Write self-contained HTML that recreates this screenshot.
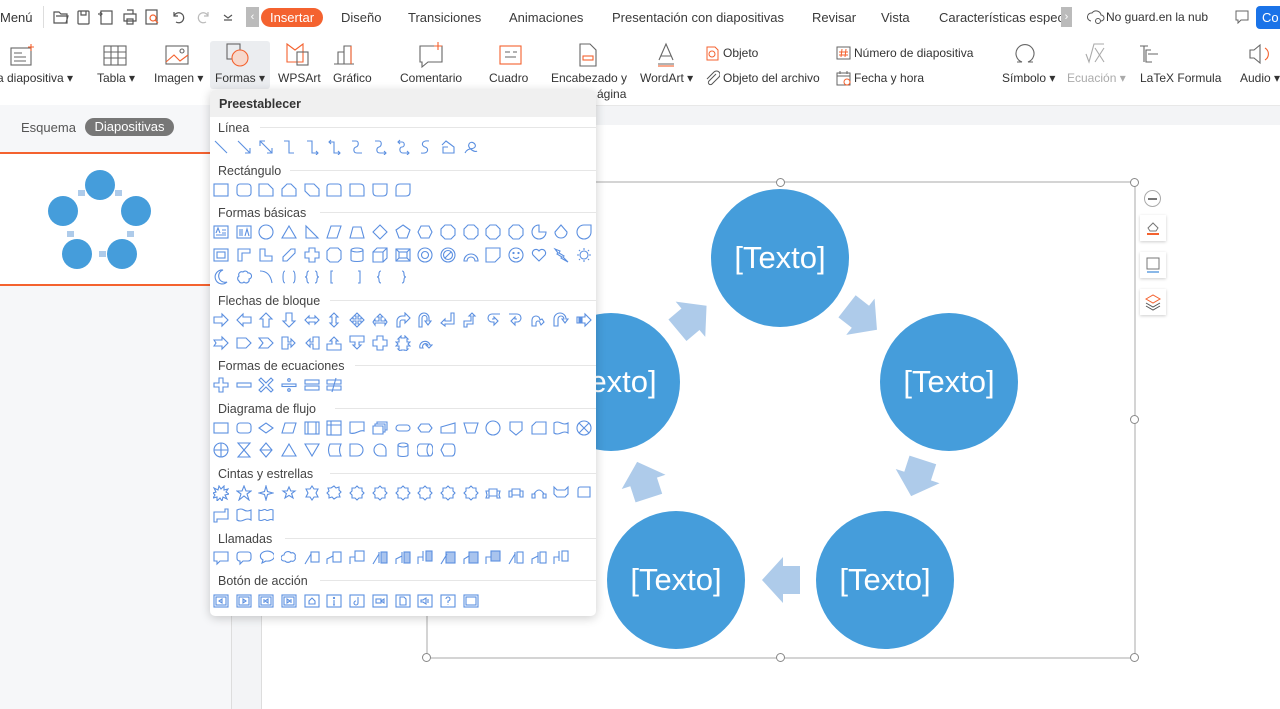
<!DOCTYPE html>
<html><head><meta charset="utf-8">
<style>
*{box-sizing:border-box;margin:0;padding:0}
body{width:1280px;height:709px;overflow:hidden;position:relative;background:#fff;font-family:"Liberation Sans",sans-serif;color:#333}
.a{position:absolute;white-space:nowrap}
.tab{position:absolute;top:10px;font-size:13px;color:#3a3a3a;white-space:nowrap}
.lbl{position:absolute;top:71px;font-size:12px;color:#333;white-space:nowrap}
.ic{position:absolute}
.ic svg{display:block}
.dd{position:absolute;left:210px;top:90px;width:386px;height:526px;background:#fff;border-radius:5px;box-shadow:0 2px 10px rgba(0,0,0,.2)}
.sec{position:absolute;left:8px;font-size:12.5px;color:#444;white-space:nowrap}
.sl{position:absolute;left:0;right:0;height:1px;background:#e6e6e6}
.row{position:absolute;left:3px;display:flex;gap:6.7px}
.row svg{width:16px;height:16px;fill:none;stroke:#5b8fe0;stroke-width:1.1;flex:none}
.circ{position:absolute;width:138px;height:138px;border-radius:50%;background:#459ddb;color:#fff;font-size:31px;display:flex;align-items:center;justify-content:center}
.h{position:absolute;width:9px;height:9px;border:1px solid #888;border-radius:50%;background:#fff}
.side{position:absolute;left:1140px;width:26px;height:26px;background:#fff;box-shadow:0 1px 3px rgba(0,0,0,.2)}
</style></head><body>
<!-- top bar -->
<div class="a" style="left:0;top:10px;font-size:13px">Menú</div>
<div class="a" style="left:43px;top:6px;width:1px;height:22px;background:#ddd"></div>
<svg class="a" style="left:52px;top:8px" width="190" height="18" fill="none" stroke="#555" stroke-width="1.2">
<path d="M2 4h5l2 2h6v9H2z M4 8h12l-2 7"/>
<rect x="26" y="3" width="11" height="13" rx="1"/><path d="M29 3v4h5V3"/>
<rect x="49" y="3" width="11" height="13"/><path d="M46 6h4m-2-2 2 2-2 2"/>
<path d="M72 6h12v7H72z M75 2h6v4 M75 11h6v5h-6z"/>
<rect x="94" y="2" width="11" height="14" stroke="#555"/><circle cx="101" cy="10" r="3" stroke="#f4622f"/><path d="M103 12l3 3" stroke="#f4622f"/>
<path d="M122 8a5 5 0 1 1 2 6 M122 4v4h4"/>
<path d="M156 8a5 5 0 1 0-2 6 M156 4v4h-4" stroke="#bbb"/>
<path d="M172 7l4 3 4-3 M172 12h8"/>
</svg>
<div class="a" style="left:246px;top:7px;width:13px;height:20px;background:#bbb;color:#fff;font-size:11px;text-align:center;line-height:20px">‹</div>
<div class="a" style="left:261px;top:8px;width:62px;height:19px;background:#f4622f;border-radius:10px;color:#fff;font-size:13px;text-align:center;line-height:19px">Insertar</div>
<div class="tab" style="left:341px">Diseño</div>
<div class="tab" style="left:408px">Transiciones</div>
<div class="tab" style="left:509px">Animaciones</div>
<div class="tab" style="left:612px">Presentación con diapositivas</div>
<div class="tab" style="left:812px">Revisar</div>
<div class="tab" style="left:881px">Vista</div>
<div class="tab" style="left:939px;width:123px;overflow:hidden">Características especiales</div>
<div class="a" style="left:1061px;top:7px;width:11px;height:20px;background:#bbb;color:#fff;font-size:11px;text-align:center;line-height:20px">›</div>
<svg class="a" style="left:1087px;top:9px" width="18" height="16" fill="none" stroke="#555"><path d="M4 12a4 4 0 0 1 1-8 5 5 0 0 1 9 2 3 3 0 0 1 0 6"/><circle cx="11" cy="12" r="2.5"/></svg>
<div class="a" style="left:1106px;top:10px;font-size:12px">No guard.en la nub</div>
<svg class="a" style="left:1235px;top:10px" width="15" height="14" fill="none" stroke="#666"><path d="M1 1h12v9H6l-3 3v-3H1z"/></svg>
<div class="a" style="left:1256px;top:6px;width:30px;height:23px;background:#1a73e8;border-radius:4px;color:#fff;font-size:13px;line-height:23px;padding-left:6px">Co</div>
<!-- ribbon -->
<div class="a" style="left:210px;top:41px;width:60px;height:48px;background:#ebedf0;border-radius:3px"></div>
<svg class="a" style="left:0;top:40px" width="1280" height="30" fill="none" stroke="#666" stroke-width="1.1">
<rect x="11" y="8" width="20" height="17"/><path d="M14 13h8M14 17h12M14 21h12"/><path d="M31 4v7M28 7h6" stroke="#f4622f"/>
<rect x="104" y="6" width="22" height="19"/><path d="M104 12h22M104 18h22M111 6v19M118 6v19"/>
<rect x="166" y="6" width="22" height="18"/><path d="M166 22l8-7 6 6 8-6" stroke="#f4622f"/><circle cx="182" cy="11" r="2"/>
<rect x="227" y="4" width="13" height="15"/><circle cx="240" cy="18" r="8" stroke="#f4622f" fill="#f7d8cc"/>
<path d="M287 4l8 6 8-6v18h-16z" stroke="#f4622f"/><rect x="297" y="12" width="11" height="13"/>
<path d="M338 24V12h6v12M344 24V6h7v18M334 24h20" /><path d="M351 24V6" stroke="#f4622f"/>
<path d="M420 6h22v16h-14l-6 5v-5h-2z"/><path d="M438 2v8M434 6h8" stroke="#f4622f"/>
<rect x="500" y="6" width="21" height="18" stroke="#f4622f"/><path d="M505 12h5M505 17h11M513 12h4"/>
<path d="M580 4h10l6 6v16h-16z"/><rect x="583" y="16" width="10" height="4" stroke="#f4622f"/>
<path d="M659 20l7-16 7 16M661 16h10M658 24h16" /><path d="M658 26h16" stroke="#f4622f"/>
<path d="M1017 22h5a9 9 0 1 1 6 0h5"/>
<path d="M1086 14l3 8 5-18h10M1095 8l9 14M1104 8l-9 14" stroke="#aaa"/>
<path d="M1140 6h8M1144 6v16M1148 14h10M1151 10h-5v12h6" />
<path d="M1250 10h4l6-5v18l-6-5h-4z"/><path d="M1265 8a7 7 0 0 1 0 12" stroke="#f4622f"/>
</svg>
<div class="lbl" style="left:-3px">a diapositiva ▾</div>
<div class="lbl" style="left:97px">Tabla ▾</div>
<div class="lbl" style="left:154px">Imagen ▾</div>
<div class="lbl" style="left:215px">Formas ▾</div>
<div class="lbl" style="left:278px">WPSArt</div>
<div class="lbl" style="left:333px">Gráfico</div>
<div class="lbl" style="left:400px">Comentario</div>
<div class="lbl" style="left:489px">Cuadro</div>
<div class="lbl" style="left:551px">Encabezado y</div>
<div class="lbl" style="left:597px;top:87px">ágina</div>
<div class="lbl" style="left:640px">WordArt ▾</div>
<svg class="a" style="left:704px;top:45px" width="16" height="16" fill="none" stroke="#f4622f"><path d="M3 2h8l3 3v10H3z"/><circle cx="8" cy="9" r="3"/></svg>
<div class="lbl" style="left:723px;top:46px">Objeto</div>
<svg class="a" style="left:704px;top:70px" width="16" height="16" fill="none" stroke="#555"><path d="M12 4l-7 7a2 2 0 0 0 3 3l7-7a3 3 0 0 0-5-5L3 9"/></svg>
<div class="lbl" style="left:723px">Objeto del archivo</div>
<svg class="a" style="left:836px;top:45px" width="16" height="16" fill="none" stroke="#666"><rect x="1" y="2" width="13" height="12"/><path d="M6 4l-1 8M10 4l-1 8M3 7h9M3 10h9" stroke="#f4622f"/></svg>
<div class="lbl" style="left:854px;top:46px">Número de diapositiva</div>
<svg class="a" style="left:836px;top:70px" width="16" height="16" fill="none" stroke="#666"><rect x="1" y="3" width="13" height="12"/><path d="M1 6h13M4 1v3M11 1v3"/><circle cx="11" cy="12" r="3" stroke="#f4622f"/></svg>
<div class="lbl" style="left:854px">Fecha y hora</div>
<div class="lbl" style="left:1002px">Símbolo ▾</div>
<div class="lbl" style="left:1067px;color:#aaa">Ecuación ▾</div>
<div class="lbl" style="left:1140px">LaTeX Formula</div>
<div class="lbl" style="left:1240px">Audio ▾</div>
<!-- lower area -->
<div class="a" style="left:0;top:105px;width:1280px;height:20px;background:#f3f4f6;border-top:1px solid #e8e8e8"></div>
<div class="a" style="left:0;top:105px;width:232px;height:604px;background:#f6f7f9;border-right:1px solid #ddd"></div>
<div class="a" style="left:232px;top:125px;width:30px;height:584px;background:#f3f4f6"></div>
<div class="a" style="left:261px;top:125px;width:1px;height:584px;background:#ddd"></div>
<div class="a" style="left:21px;top:120px;font-size:13px;color:#555">Esquema</div>
<div class="a" style="left:85px;top:118px;width:89px;height:18px;background:#777;border-radius:9px;color:#fff;font-size:13px;text-align:center;line-height:18px">Diapositivas</div>
<div class="a" style="left:0;top:152px;width:232px;height:134px;background:#fff;border-top:2px solid #f4622f;border-bottom:2px solid #f4622f"></div>
<svg class="a" style="left:40px;top:165px" width="120" height="110">
<g fill="#459ddb"><circle cx="60" cy="20" r="15"/><circle cx="96" cy="46" r="15"/><circle cx="82" cy="89" r="15"/><circle cx="37" cy="89" r="15"/><circle cx="23" cy="46" r="15"/></g>
<g fill="#aecbea"><rect x="38" y="25" width="7" height="6"/><rect x="75" y="25" width="7" height="6"/><rect x="87" y="66" width="7" height="6"/><rect x="59" y="86" width="7" height="6"/><rect x="27" y="66" width="7" height="6"/></g>
</svg>
<!-- slide -->
<svg class="a" style="left:262px;top:125px" width="1018" height="584">
<g fill="#aecbea">
<polygon points="-19,-14 -2,-14 -2,-23 19,0 -2,23 -2,14 -19,14" transform="translate(430,193) rotate(-40)"/>
<polygon points="-19,-14 -2,-14 -2,-23 19,0 -2,23 -2,14 -19,14" transform="translate(600,193) rotate(38)"/>
<polygon points="-19,-14 -2,-14 -2,-23 19,0 -2,23 -2,14 -19,14" transform="translate(655,353) rotate(108)"/>
<polygon points="-19,-14 -2,-14 -2,-23 19,0 -2,23 -2,14 -19,14" transform="translate(519,455) rotate(180)"/>
<polygon points="-19,-14 -2,-14 -2,-23 19,0 -2,23 -2,14 -19,14" transform="translate(381,355) rotate(-108)"/>
</g>
<rect x="165" y="57" width="708" height="476" fill="none" stroke="#aaa"/>
</svg>
<div class="circ" style="left:711px;top:189px">[Texto]</div>
<div class="circ" style="left:880px;top:313px">[Texto]</div>
<div class="circ" style="left:816px;top:511px">[Texto]</div>
<div class="circ" style="left:607px;top:511px">[Texto]</div>
<div class="circ" style="left:542px;top:313px">[Texto]</div>
<div class="h" style="left:776px;top:178px"></div><div class="h" style="left:1130px;top:178px"></div>
<div class="h" style="left:1130px;top:415px"></div><div class="h" style="left:1130px;top:653px"></div>
<div class="h" style="left:776px;top:653px"></div><div class="h" style="left:422px;top:653px"></div>
<!-- side tools -->
<div class="a" style="left:1144px;top:190px;width:17px;height:17px;border:1px solid #aaa;border-radius:50%"></div>
<div class="a" style="left:1148px;top:198px;width:9px;height:1.5px;background:#777"></div>
<div class="side" style="top:215px"><svg width="26" height="26" fill="none" stroke="#777"><path d="M8 13l5-5 5 5-2 3h-6z"/><path d="M7 19h12" stroke="#f4622f" stroke-width="2"/></svg></div>
<div class="side" style="top:252px"><svg width="26" height="26" fill="none" stroke="#777"><rect x="7" y="6" width="12" height="11"/><path d="M7 20h12" stroke="#8ab8e8" stroke-width="2"/></svg></div>
<div class="side" style="top:289px"><svg width="26" height="26" fill="none"><path d="M6 10l7-4 7 4-7 4z" stroke="#f4622f"/><path d="M6 14l7 4 7-4M6 17l7 4 7-4" stroke="#555"/></svg></div>
<!-- dropdown -->
<div class="dd">
<div class="a" style="left:0;top:0;width:386px;height:27px;background:#f0f0f0;border-radius:5px 5px 0 0"></div>
<div class="a" style="left:9px;top:7px;font-size:12.5px;font-weight:bold;color:#333">Preestablecer</div>

<div class="sec" style="top:31px">Línea</div><div class="sl" style="left:50px;top:37px"></div>
<div class="row" style="top:49px">
<svg><path d="M2 2l12 12"/></svg><svg><path d="M2 2l12 12M14 9v5H9"/></svg><svg><path d="M2 2l12 12M2 7V2h5M14 9v5H9"/></svg><svg><path d="M3 2h5v12h5"/></svg><svg><path d="M3 2h5v12h6M12 12l2 2-2 2"/></svg><svg><path d="M3 3h5v11h6M5 1L3 3l2 2M12 12l2 2-2 2"/></svg><svg><path d="M3 2h4c3 0 3 5 0 6s-3 6 1 6h5"/></svg><svg><path d="M3 2h4c3 0 3 5 0 6s-3 6 1 6h6M12 12l2 2-2 2"/></svg><svg><path d="M3 3h4c3 0 3 5 0 5s-3 6 1 6h6M5 1L3 3l2 2M12 12l2 2-2 2"/></svg><svg><path d="M12 2C4 1 4 7 8 8s4 7-4 6"/></svg><svg><path d="M2 6l4-4 4 3 4 3v6H3V8l5 0"/></svg><svg><path d="M2 14c3-6 8-3 10-6S8 1 6 5s6 9 8 7"/></svg>
</div>
<div class="sec" style="top:74px">Rectángulo</div><div class="sl" style="left:80px;top:80px"></div>
<div class="row" style="top:92px">
<svg><rect x="1" y="2" width="14" height="12"/></svg><svg><rect x="1" y="2" width="14" height="12" rx="3"/></svg><svg><path d="M1 2h9l5 5v7H1z"/></svg><svg><path d="M1 14V7l5-5h4l5 5v7z"/></svg><svg><path d="M1 2h9l5 5v7H6L1 9z"/></svg><svg><path d="M1 14V5q0-3 3-3h8q3 0 3 3v9z"/></svg><svg><path d="M1 2h10q4 0 4 4v8H1z"/></svg><svg><path d="M1 2h14v8q0 4-4 4H5q-4 0-4-4z"/></svg><svg><path d="M5 2h10v8q0 4-4 4H1V6q0-4 4-4z"/></svg>
</div>
<div class="sec" style="top:116px">Formas básicas</div><div class="sl" style="left:110px;top:122px"></div>
<div class="row" style="top:134px">
<svg><rect x="1" y="2" width="14" height="12"/><path d="M3 9l2-5 2 5M9 6h4M9 9h4M3 11h10"/></svg><svg><rect x="1" y="2" width="14" height="12"/><path d="M4 5v7M6 5v7M9 12l2-7 2 7"/></svg><svg><circle cx="8" cy="8" r="7"/></svg><svg><path d="M8 2l7 12H1z"/></svg><svg><path d="M2 2v12h12z"/></svg><svg><path d="M5 2h10l-4 12H1z"/></svg><svg><path d="M4 3h8l3 11H1z"/></svg><svg><path d="M8 1l7 7-7 7-7-7z"/></svg><svg><path d="M8 1l7 5-3 8H4L1 6z"/></svg><svg><path d="M4 2h8l3 6-3 6H4L1 8z"/></svg><svg><path d="M5 1h6l4 4v6l-4 4H5l-4-4V5z"/></svg><svg><path d="M5 1h6l4 4v6l-4 4H5l-4-4V5z"/></svg><svg><path d="M5 1h6l4 4v6l-4 4H5l-4-4V5z"/></svg><svg><path d="M5 1h6l4 4v6l-4 4H5l-4-4V5z"/></svg><svg><path d="M8 8V1a7 7 0 1 0 7 7z"/></svg><svg><path d="M8 1l6 7a6 6 0 1 1-12 0z"/></svg><svg><path d="M15 1v7a7 7 0 1 1-7-7z"/></svg>
</div>
<div class="row" style="top:157px">
<svg><rect x="1" y="2" width="14" height="12"/><rect x="4" y="5" width="8" height="6"/></svg><svg><path d="M2 14V2h12v4H6v8z"/></svg><svg><path d="M2 2h5v7h7v5H2z"/></svg><svg><path d="M2 14V10l8-8h4v4l-8 8z"/></svg><svg><path d="M5 1h6v4h4v6h-4v4H5v-4H1V5h4z"/></svg><svg><path d="M4 1h8l3 3v8l-3 3H4l-3-3V4z"/></svg><svg><ellipse cx="8" cy="3" rx="6" ry="2"/><path d="M2 3v10c0 2 12 2 12 0V3"/></svg><svg><path d="M1 5h10v10H1zM1 5l4-4h10v10l-4 4M11 5l4-4"/></svg><svg><rect x="1" y="2" width="14" height="12"/><rect x="4" y="5" width="8" height="6"/><path d="M1 2l3 3M15 2l-3 3M1 14l3-3M15 14l-3-3"/></svg><svg><circle cx="8" cy="8" r="7"/><circle cx="8" cy="8" r="3.5"/></svg><svg><circle cx="8" cy="8" r="7"/><circle cx="8" cy="8" r="4.5"/><path d="M5 11l6-6"/></svg><svg><path d="M1 14A7 7 0 0 1 15 14h-3a4 4 0 0 0-8 0z"/></svg><svg><path d="M1 1h14v9l-5 5H1z"/></svg><svg><circle cx="8" cy="8" r="7"/><path d="M5 10q3 3 6 0"/><circle cx="5.5" cy="6" r=".6"/><circle cx="10.5" cy="6" r=".6"/></svg><svg><path d="M8 14L2 8a3.5 3.5 0 0 1 6-4 3.5 3.5 0 0 1 6 4z"/></svg><svg><path d="M2 2l5 2-1 2 5 3-1 1 5 5-7-4 1-1-5-3 1-1z"/></svg><svg><circle cx="8" cy="8" r="4"/><path d="M8 1v2M8 13v2M1 8h2M13 8h2M3 3l1 1M12 12l1 1M3 13l1-1M12 4l1-1"/></svg>
</div>
<div class="row" style="top:179px">
<svg><path d="M10 1a7 7 0 1 0 4 12A6 6 0 0 1 10 1z"/></svg><svg><path d="M3 12a3 3 0 0 1 0-5 3 3 0 0 1 4-4 3 3 0 0 1 5 1 3 3 0 0 1 1 6 3 3 0 0 1-5 3 3 3 0 0 1-5-1z"/></svg><svg><path d="M2 2q10 0 12 12"/></svg><svg><path d="M4 2q-2 0-2 6t2 6M12 2q2 0 2 6t-2 6"/></svg><svg><path d="M5 2q-2 0-2 3t-2 3q2 0 2 3t2 3M11 2q2 0 2 3t2 3q-2 0-2 3t-2 3"/></svg><svg><path d="M7 2H5v12h2"/></svg><svg><path d="M9 2h2v12H9"/></svg><svg><path d="M9 2q-2 0-2 3t-2 3q2 0 2 3t2 3"/></svg><svg><path d="M7 2q2 0 2 3t2 3q-2 0-2 3t-2 3"/></svg>
</div>
<div class="sec" style="top:204px">Flechas de bloque</div><div class="sl" style="left:120px;top:210px"></div>
<div class="row" style="top:222px">
<svg><path d="M1 5h8V2l6 6-6 6v-3H1z"/></svg><svg><path d="M15 5H7V2L1 8l6 6v-3h8z"/></svg><svg><path d="M5 15V7H2l6-6 6 6h-3v8z"/></svg><svg><path d="M5 1v8H2l6 6 6-6h-3V1z"/></svg><svg><path d="M1 8l4-4v2h6V4l4 4-4 4v-2H5v2z"/></svg><svg><path d="M8 1l4 4h-2v6h2l-4 4-4-4h2V5H4z"/></svg><svg><path d="M8 1l3 3H9v3h3V5l3 3-3 3V9H9v3h2l-3 3-3-3h2V9H4v2L1 8l3-3v2h3V4H5z"/></svg><svg><path d="M8 2l3 3H9v4h4V7l2 3-2 3v-2H3v2L1 10l2-3v2h4V5H5z"/></svg><svg><path d="M2 15V9a5 5 0 0 1 5-5h3V1l5 5-5 5V8H7a2 2 0 0 0-2 2v5z"/></svg><svg><path d="M2 15V6a5 5 0 0 1 10 0v3h2l-3 4-3-4h2V6a2 2 0 0 0-5 0v9z"/></svg><svg><path d="M1 11l4-4v2h6V1h3v11H5v2z"/></svg><svg><path d="M1 15V9h7V4H6l3-3 3 3h-2v8H4v3z"/></svg><svg><path d="M15 2H7a4 4 0 0 0 0 8h2v3l4-4-4-4v2H7"/></svg><svg><path d="M1 2h8a4 4 0 0 1 0 8H7v3L3 9l4-4v2h2"/></svg><svg><path d="M1 14V8a4 4 0 0 1 8 0l2-1 2 3-3 3-1-2a2 2 0 0 0-4 0v3z"/></svg><svg><path d="M1 14V7a6 6 0 0 1 12 0h2l-3 4-3-4h2a3 3 0 0 0-6 0v7z"/></svg><svg><path d="M1 5h2v6H1zM4 5h1v6H4zM6 5h3V2l6 6-6 6v-3H6z"/></svg>
</div>
<div class="row" style="top:245px">
<svg><path d="M1 5h8V2l6 6-6 6v-3H1l2-3z"/></svg><svg><path d="M1 3h9l5 5-5 5H1z"/></svg><svg><path d="M1 3h9l5 5-5 5H1l4-5z"/></svg><svg><path d="M1 2h6v5h3V4l4 4-4 4V9H7v5H1z"/></svg><svg><path d="M15 2H9v5H6V4L2 8l4 4V9h3v5h6z"/></svg><svg><path d="M1 15V9h5V6H4l4-4 4 4h-2v3h5v6z"/></svg><svg><path d="M1 1h14v6h-5v3h2l-4 4-4-4h2V7H1z"/></svg><svg><path d="M5 1h6v4h4v6h-4v4H5v-4H1V5h4z"/></svg><svg><path d="M6 3h4V1l3 3h-1v3h3l-2 2 2 2h-3v3h1l-3 3v-2H6v2l-3-3h1v-3H1l2-2-2-2h3V4H3l3-3z"/></svg><svg><path d="M3 13a5 5 0 1 1 10-3h2l-3 3-3-3h2a2 2 0 1 0-5 3z"/></svg>
</div>
<div class="sec" style="top:269px">Formas de ecuaciones</div><div class="sl" style="left:145px;top:275px"></div>
<div class="row" style="top:287px">
<svg><path d="M6 1h4v5h5v4h-5v5H6v-5H1V6h5z"/></svg><svg><rect x="1" y="6" width="14" height="4"/></svg><svg><path d="M3 1l5 5 5-5 2 2-5 5 5 5-2 2-5-5-5 5-2-2 5-5-5-5z"/></svg><svg><rect x="1" y="7" width="14" height="2.5"/><circle cx="8" cy="3" r="1.3"/><circle cx="8" cy="13" r="1.3"/></svg><svg><rect x="1" y="3" width="14" height="4"/><rect x="1" y="9" width="14" height="4"/></svg><svg><path d="M1 3h14v4H1zM1 9h14v4H1zM10 1L6 15"/></svg>
</div>
<div class="sec" style="top:312px">Diagrama de flujo</div><div class="sl" style="left:125px;top:318px"></div>
<div class="row" style="top:330px">
<svg><rect x="1" y="3" width="14" height="10"/></svg><svg><rect x="1" y="3" width="14" height="10" rx="3"/></svg><svg><path d="M1 8l7-5 7 5-7 5z"/></svg><svg><path d="M4 3h11l-3 10H1z"/></svg><svg><rect x="1" y="2" width="14" height="12"/><path d="M4 2v12M12 2v12"/></svg><svg><rect x="1" y="1" width="14" height="14"/><path d="M1 5h14M5 1v14"/></svg><svg><path d="M1 2h14v9c-4-2-8 4-14 2z"/></svg><svg><path d="M1 6h10v8H1zM3 6V4h10v8h-2M5 4V2h10v8h-2"/></svg><svg><rect x="1" y="5" width="14" height="6" rx="3"/></svg><svg><path d="M4 4h8l3 4-3 4H4L1 8z"/></svg><svg><path d="M1 7l14-4v10H1z"/></svg><svg><path d="M1 3h14l-3 10H4z"/></svg><svg><circle cx="8" cy="8" r="7"/></svg><svg><path d="M2 2h12v8l-6 5-6-5z"/></svg><svg><path d="M5 2h10v12H1V6z"/></svg><svg><path d="M1 3q3-2 7 0t7 0v10q-3-2-7 0t-7 0z"/></svg><svg><circle cx="8" cy="8" r="7"/><path d="M3 3l10 10M13 3L3 13"/></svg>
</div>
<div class="row" style="top:352px">
<svg><circle cx="8" cy="8" r="7"/><path d="M1 8h14M8 1v14"/></svg><svg><path d="M2 1h12L2 15h12z"/></svg><svg><path d="M8 1l6 7-6 7-6-7zM2 8h12"/></svg><svg><path d="M8 2l7 12H1z"/></svg><svg><path d="M1 2h14L8 14z"/></svg><svg><path d="M4 2h11q-3 6 0 12H4q-3-6 0-12z"/></svg><svg><path d="M1 2h7a6 6 0 0 1 0 12H1z"/></svg><svg><path d="M8 14a6 6 0 1 1 6-6v6z"/></svg><svg><ellipse cx="8" cy="3" rx="5" ry="2"/><path d="M3 3v10c0 2 10 2 10 0V3"/></svg><svg><path d="M3 2h10a3 6 0 0 1 0 12H3a3 6 0 0 1 0-12zM13 2a3 6 0 0 0 0 12"/></svg><svg><path d="M4 2h8q3 0 3 6t-3 6H4L1 8z"/></svg>
</div>
<div class="sec" style="top:377px">Cintas y estrellas</div><div class="sl" style="left:120px;top:383px"></div>
<div class="row" style="top:395px">
<svg><path d="M1 3l4 2 1-4 2 3 3-3v4l4-1-2 3 3 2-4 1 2 4-4-2-1 4-2-3-3 3v-4l-4 1 2-3-2-2 3-1z"/></svg><svg><path d="M8 1l2 5h5l-4 3 2 6-5-4-5 4 2-6-4-3h5z"/></svg><svg><path d="M8 1l1.5 5.5L15 8l-5.5 1.5L8 15l-1.5-5.5L1 8l5.5-1.5z"/></svg><svg><path d="M8 2l1.8 4h4.2l-3.4 2.6 1.4 4.4L8 10.4 4 13l1.4-4.4L2 6h4.2z"/></svg><svg><path d="M8 1l2 3h4l-2 4 2 4h-4l-2 3-2-3H2l2-4-2-4h4z"/></svg><svg><path d="M8 1l2 2 3-1v3l2 2-2 2 1 3h-3l-3 2-2-2-3 1v-3L1 8l2-2-1-3h3z"/></svg><svg><path d="M8 1l2 2h3v3l2 2-2 2v3h-3l-2 2-2-2H3v-3L1 8l2-2V3h3z"/></svg><svg><path d="M8 1l2 2h3v3l2 2-2 2v3h-3l-2 2-2-2H3v-3L1 8l2-2V3h3z"/></svg><svg><path d="M8 1l2 2h3v3l2 2-2 2v3h-3l-2 2-2-2H3v-3L1 8l2-2V3h3z"/></svg><svg><path d="M8 1l2 2h3v3l2 2-2 2v3h-3l-2 2-2-2H3v-3L1 8l2-2V3h3z"/></svg><svg><path d="M8 1l2 2h3v3l2 2-2 2v3h-3l-2 2-2-2H3v-3L1 8l2-2V3h3z"/></svg><svg><path d="M8 1l2 2h3v3l2 2-2 2v3h-3l-2 2-2-2H3v-3L1 8l2-2V3h3z"/></svg><svg><path d="M4 4h8v7H4zM1 6h3v7H1l1-3zM15 6h-3v7h3l-1-3z"/></svg><svg><path d="M4 4h8v6H4zM1 6h3v6H1zM15 6h-3v6h3z"/></svg><svg><path d="M3 9q5-8 10 0M1 9h3v4H1zM12 9h3v4h-3z"/></svg><svg><path d="M1 2l3 3h8l3-3v7l-3 3H4L1 9z"/></svg><svg><path d="M4 2h10v10H2V5q0-3 2-3zM14 2v2"/></svg>
</div>
<div class="row" style="top:417px">
<svg><path d="M2 5h10V2h3v10H4v3H1V5z"/></svg><svg><path d="M1 3q4-2 7 0t7 0v10q-3-2-7 0t-7 0z"/></svg><svg><path d="M1 3q2 1 4 0t3 0 3 0 4 0v10q-2-1-4 0t-3 0-3 0-4 0z"/></svg>
</div>
<div class="sec" style="top:442px">Llamadas</div><div class="sl" style="left:75px;top:448px"></div>
<div class="row" style="top:460px">
<svg><path d="M1 2h14v9H7l-3 3v-3H1z"/></svg><svg><path d="M4 2h8q3 0 3 3v3q0 3-3 3H7l-3 3v-3q-3 0-3-3V5q0-3 3-3z"/></svg><svg><path d="M4 13l1-3a7 5 0 1 1 3 1z"/></svg><svg><path d="M3 11a3 3 0 0 1 0-6 4 4 0 0 1 7-2 3 3 0 0 1 4 4 3 3 0 0 1-4 4 4 4 0 0 1-6 0z"/></svg><svg><rect x="7" y="2" width="8" height="10"/><path d="M1 14L7 4"/></svg><svg><rect x="7" y="2" width="8" height="10"/><path d="M1 14V9l6-3"/></svg><svg><rect x="6" y="1" width="9" height="10"/><path d="M1 14V7h5"/></svg><svg><rect x="9" y="2" width="6" height="11" fill="#a9c4ee"/><path d="M1 14L7 4M7 2v11"/></svg><svg><rect x="9" y="2" width="6" height="11" fill="#a9c4ee"/><path d="M1 14V9l6-3M7 2v11"/></svg><svg><rect x="9" y="1" width="6" height="10" fill="#a9c4ee"/><path d="M1 14V7h5M6 1v10"/></svg><svg><rect x="6" y="2" width="9" height="11" fill="#a9c4ee"/><path d="M1 14L7 4"/></svg><svg><rect x="6" y="2" width="9" height="11" fill="#a9c4ee"/><path d="M1 14V9l5-3"/></svg><svg><rect x="6" y="1" width="9" height="10" fill="#a9c4ee"/><path d="M1 14V7h5"/></svg><svg><rect x="9" y="2" width="6" height="11"/><path d="M1 14L7 4M7 2v11"/></svg><svg><rect x="9" y="2" width="6" height="11"/><path d="M1 14V9l6-3M7 2v11"/></svg><svg><rect x="9" y="1" width="6" height="10"/><path d="M1 14V7h5M6 1v10"/></svg>
</div>
<div class="sec" style="top:484px">Botón de acción</div><div class="sl" style="left:110px;top:490px"></div>
<div class="row" style="top:503px">
<svg><rect x="1" y="2" width="14" height="12"/><rect x="3" y="4" width="10" height="8"/><path d="M9 6L6 8l3 2z"/></svg><svg><rect x="1" y="2" width="14" height="12"/><rect x="3" y="4" width="10" height="8"/><path d="M7 6l3 2-3 2z"/></svg><svg><rect x="1" y="2" width="14" height="12"/><rect x="3" y="4" width="10" height="8"/><path d="M6 6v4M10 6L7 8l3 2z"/></svg><svg><rect x="1" y="2" width="14" height="12"/><rect x="3" y="4" width="10" height="8"/><path d="M10 6v4M6 6l3 2-3 2z"/></svg><svg><rect x="1" y="2" width="14" height="12"/><path d="M5 11V8l3-3 3 3v3z"/></svg><svg><rect x="1" y="2" width="14" height="12"/><path d="M8 7v5M7 12h2"/><circle cx="8" cy="5" r=".6"/></svg><svg><rect x="1" y="2" width="14" height="12"/><path d="M9 4v6a2 2 0 1 1-2-2"/></svg><svg><rect x="1" y="2" width="14" height="12"/><rect x="4" y="6" width="5" height="4"/><path d="M9 8l3-2v4z"/></svg><svg><rect x="1" y="2" width="14" height="12"/><path d="M5 4h4l2 2v6H5z"/></svg><svg><rect x="1" y="2" width="14" height="12"/><path d="M4 7h2l3-2v6L6 9H4zM11 6v4"/></svg><svg><rect x="1" y="2" width="14" height="12"/><path d="M6 6a2 2 0 1 1 2 2v2M8 11.5v.5"/></svg><svg><rect x="1" y="2" width="14" height="12"/><rect x="3" y="4" width="10" height="8"/></svg>
</div>
</div>
</body></html>
